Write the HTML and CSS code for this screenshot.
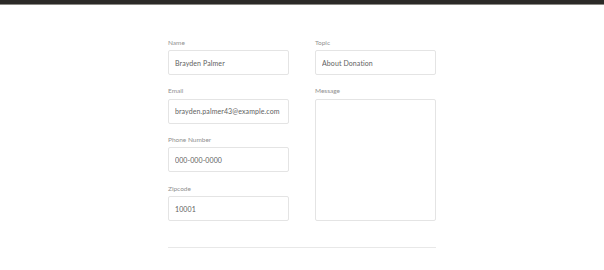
FILE: index.html
```html
<!DOCTYPE html>
<html lang="en">
<head>
  <meta charset="UTF-8" />
  <meta name="viewport" content="width=device-width, initial-scale=1.0"/>
  <title>Contact</title>
  <link rel="stylesheet" href="styles.css">
</head>
<body>
  <div class="topbar"></div>

  <form class="contact">
    <div class="col">
      <div class="field">
        <label for="name">Name</label>
        <input type="text" id="name" value="Brayden Palmer">
      </div>
      <div class="field">
        <label for="email">Email</label>
        <input type="text" id="email" value="brayden.palmer43@example.com">
      </div>
      <div class="field">
        <label for="phone">Phone Number</label>
        <input type="text" id="phone" value="000-000-0000">
      </div>
      <div class="field">
        <label for="zip">Zipcode</label>
        <input type="text" id="zip" value="10001">
      </div>
    </div>

    <div class="col">
      <div class="field">
        <label for="topic">Topic</label>
        <input type="text" id="topic" value="About Donation">
      </div>
      <div class="field grow">
        <label for="message">Message</label>
        <textarea id="message"></textarea>
      </div>
    </div>
  </form>

  <hr class="divider">
</body>
</html>
```

FILE: styles.css
```css
* {
  margin: 0;
  padding: 0;
  box-sizing: border-box;
}

body {
  font-family: 'Lato', 'Liberation Sans', sans-serif;
  background: #fff;
  color: #555;
}

.topbar {
  height: 5px;
  background: #2b2a27;
  border-bottom: 1px solid #8a8984;
}

.contact {
  width: 268px;
  margin: 33.5px auto 0;
  display: grid;
  grid-template-columns: 121px 121px;
  column-gap: 26px;
}

.col {
  display: flex;
  flex-direction: column;
  gap: 12.2px;
}

.field {
  display: flex;
  flex-direction: column;
}

.field.grow {
  flex: 1;
}

label {
  font-size: 6.5px;
  line-height: 8px;
  color: #909090;
  margin-bottom: 3.5px;
}

input,
textarea {
  height: 25px;
  border: 1px solid #e4e4e4;
  border-radius: 2px;
  padding: 0 6px;
  font-family: inherit;
  font-size: 7px;
  letter-spacing: 0.1px;
  color: #616161;
  background: #fff;
  outline: none;
}

textarea {
  flex: 1;
  height: auto;
  resize: none;
}

.divider {
  width: 268px;
  margin: 26px auto 0;
  border: none;
  border-top: 1px solid #e8e8e8;
}
```
